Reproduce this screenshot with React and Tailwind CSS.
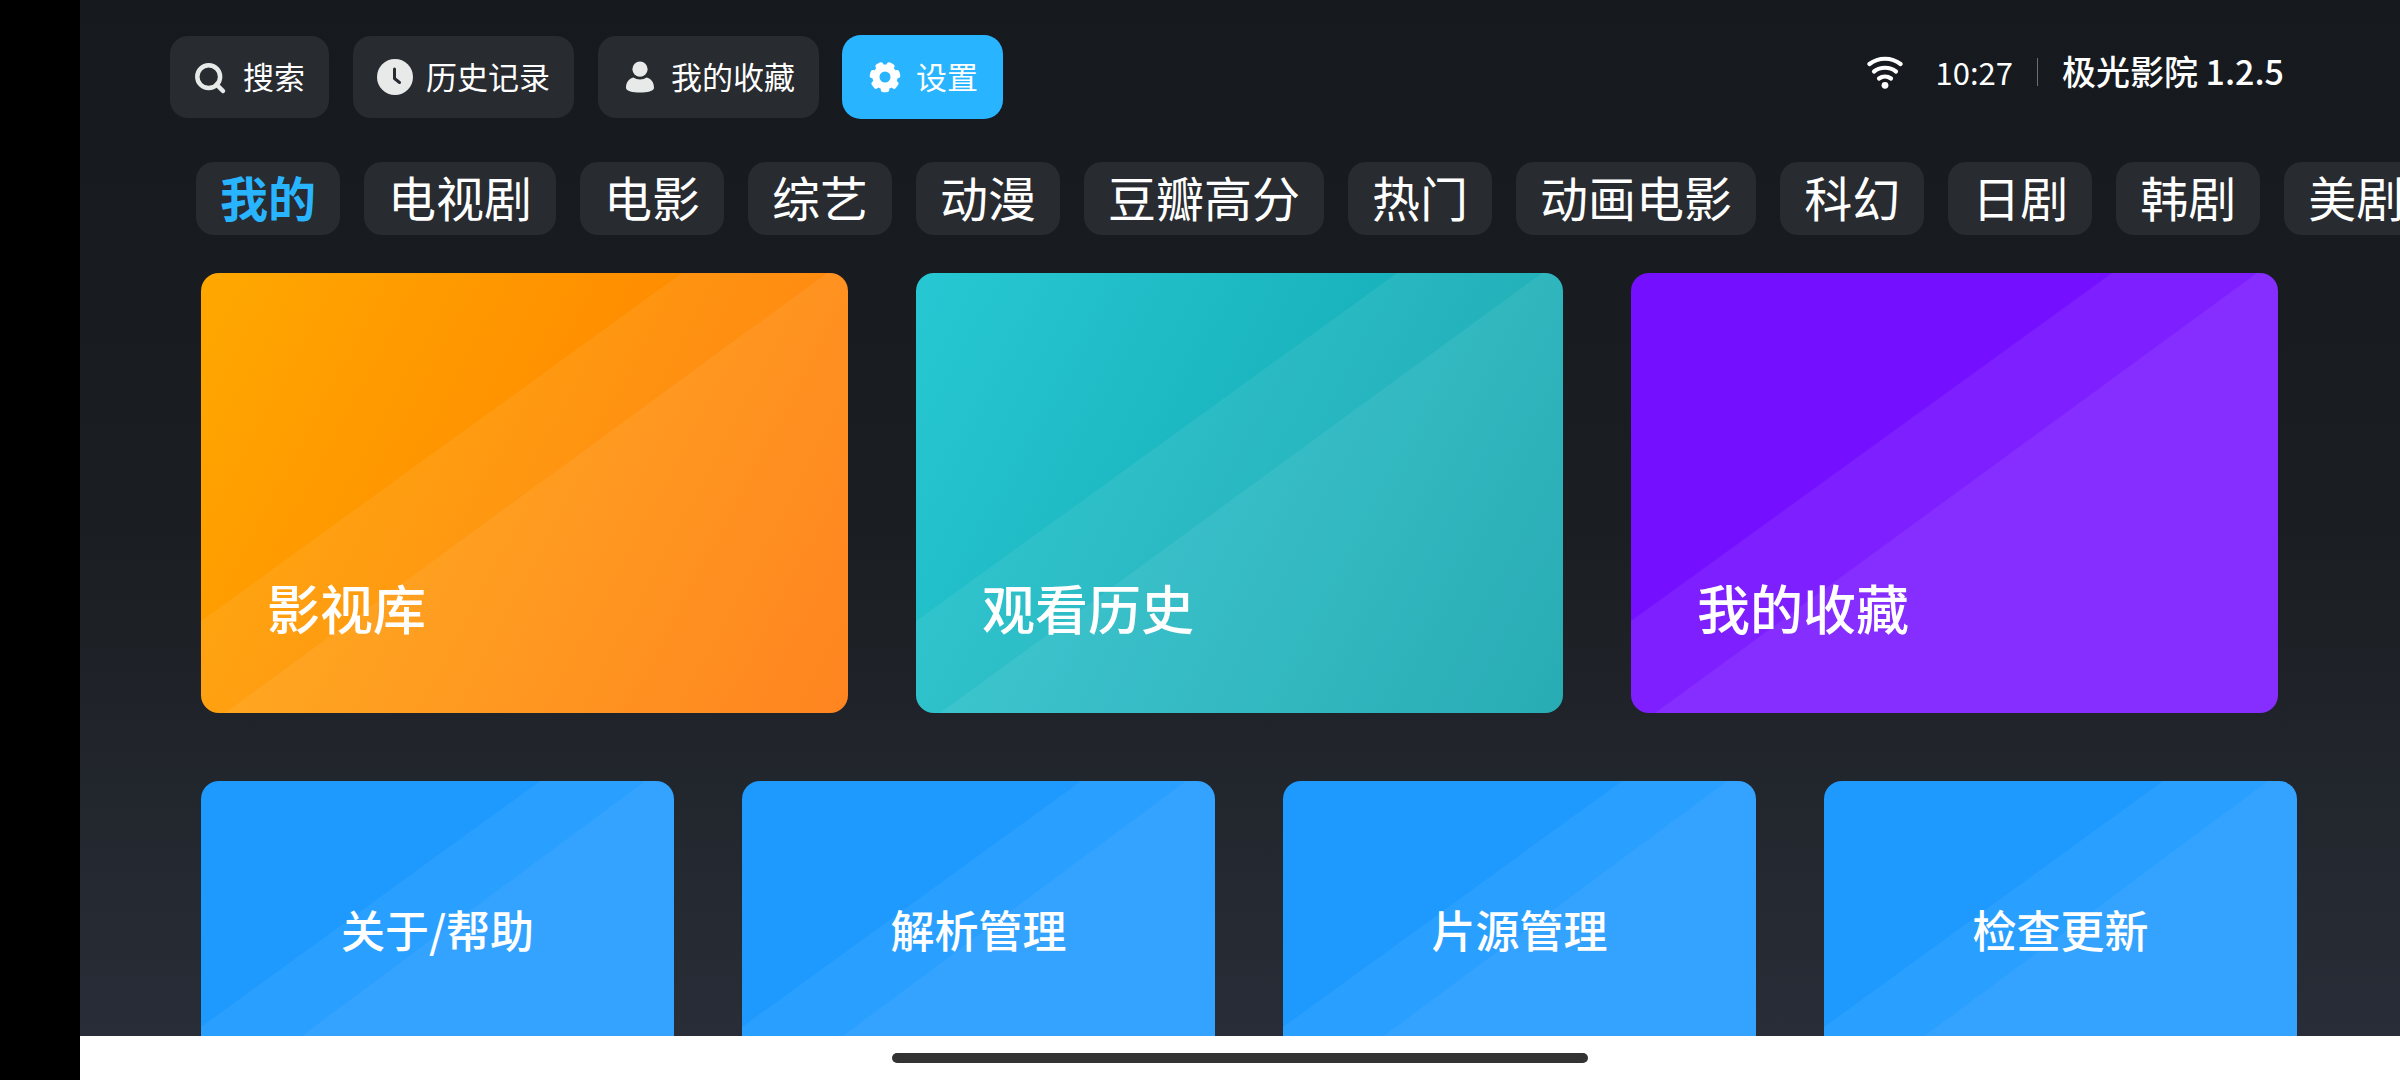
import React, { useState } from 'react'

const menus = [
  { id: 'search', name: '搜索' },
  { id: 'history', name: '历史记录' },
  { id: 'favorite', name: '我的收藏' },
  { id: 'setting', name: '设置' },
];

const tabs = ['我的', '电视剧', '电影', '综艺', '动漫', '豆瓣高分', '热门', '动画电影', '科幻', '日剧', '韩剧', '美剧'];

const bigCards = [
  { name: '影视库', color: 'bg-linear-118 from-[#ffa800] via-[#ff8f00] to-[#ff7300]' },
  { name: '观看历史', color: 'bg-linear-118 from-[#27c8d3] to-[#09a1aa]' },
  { name: '我的收藏', color: 'bg-[#750fff]' },
];

const smallCards = ['关于/帮助', '解析管理', '片源管理', '检查更新'];

const gearTeeth = [0, 1, 2, 3, 4, 5, 6];

const MenuIcon = ({ id }) => (
  <svg viewBox="0 0 36 36" className="size-9 shrink-0" fill="currentColor" aria-hidden="true">
    {id === 'search' && (
      <g fill="none" stroke="currentColor" strokeWidth="4.5">
        <circle cx="14.7" cy="17.7" r="11.4" />
        <path d="M22.500 25.500l6.500 6.500" strokeLinecap="round" />
      </g>
    )}
    {id === 'history' && (
      <>
        <circle cx="18" cy="18" r="18" />
        <path d="M17.5 10v9.500l5 4" fill="none" stroke="#282b30" strokeWidth="3" strokeLinecap="round" strokeLinejoin="round" />
      </>
    )}
    {id === 'favorite' && (
      <>
        <circle cx="18" cy="10.2" r="7.6" />
        <path d="M4 29C4 23 7 19.500 11.500 18.500C15 21 21 21 24.500 18.500C29 19.500 32 23 32 29C32 32 25 33.600 18 33.600C11 33.600 4 32 4 29z" />
      </>
    )}
    {id === 'setting' && (
      <g stroke="currentColor" fill="none">
        <circle cx="18" cy="18" r="9" strokeWidth="7" />
        {gearTeeth.map((i) => (
          <path key={i} d="M16.500 30.500h3" strokeWidth="5.500" strokeLinecap="round" transform={`rotate(${(i * 360) / 7} 18 18)`} />
        ))}
      </g>
    )}
  </svg>
)

const WifiIcon = () => (
  <svg viewBox="0 0 36 34" className="h-[34px] w-9" fill="none" stroke="currentColor" strokeWidth="4.2" strokeLinecap="round" aria-hidden="true">
    <path d="M2.500 9c9-7 22-7 31 0" />
    <path d="M7 16.500c6.500-5 15.500-5 22 0" />
    <path d="M12 23.500c3.500-2.500 8.500-2.500 12 0" />
    <circle cx="18" cy="30.300" r="3.400" fill="currentColor" stroke="none" />
  </svg>
)

// two translucent layers, each one starts on a diagonal
const Shine = ({ small }) => (
  <svg
    viewBox={small ? '0 0 473 300' : '0 0 647 440'}
    preserveAspectRatio="none"
    className="absolute inset-0 size-full"
    fill="#fff"
    fillOpacity={small ? 0.05 : 0.065}
    aria-hidden="true"
  >
    <polygon points={small ? '339,0 473,0 473,300 0,300 0,246' : '481,0 647,0 647,440 0,440 0,348'} />
    <polygon points={small ? '444,0 473,0 473,300 40,300' : '626,0 647,0 647,440 24,440'} />
  </svg>
)

const App = () => {
  const [menu, setMenu] = useState('setting');
  const [tab, setTab] = useState('我的');

  return (
    <div className="flex h-screen bg-black font-['Noto_Sans_CJK_SC',sans-serif] text-white">
      <div className="w-20 shrink-0" />
      <div className="flex min-w-0 flex-1 flex-col">
        <main className="flex min-h-0 flex-1 flex-col overflow-hidden bg-linear-to-b from-[#161a1f] via-[#1a1e22] to-[#292d37]">
          <header className="flex shrink-0 items-start justify-between pt-9 pl-[90px] pr-[116px]">
            <div className="flex gap-6">
              {menus.map((item) => (
                <button
                  key={item.id}
                  onClick={() => setMenu(item.id)}
                  className={`flex h-[82px] items-center gap-[13px] rounded-[18px] px-6 text-[31px] leading-none whitespace-nowrap ${
                    menu === item.id ? 'bg-[#29b4ff] ring-1 ring-[#29b4ff]' : 'bg-[#282b30]'
                  }`}
                >
                  <span className={menu === item.id ? 'text-white' : 'text-[#e8eaea]'}>
                    <MenuIcon id={item.id} />
                  </span>
                  <span className="pb-1">{item.name}</span>
                </button>
              ))}
            </div>
            <div className="flex h-[72px] items-center whitespace-nowrap">
              <WifiIcon />
              <time className="ml-8 pb-0.5 text-[31px] leading-none">10:27</time>
              <div className="mx-6 h-7 w-px bg-[#6b6e72]" />
              <h1 className="pb-0.5 text-[34px] leading-none font-medium">极光影院 1.2.5</h1>
            </div>
          </header>

          <nav className="mt-11 flex shrink-0 gap-6 overflow-hidden pl-[116px]">
            {tabs.map((name) => (
              <button
                key={name}
                onClick={() => setTab(name)}
                className={`h-[73px] shrink-0 rounded-[18px] bg-[#282b30] px-6 pb-1.5 text-5xl leading-none whitespace-nowrap ${
                  tab === name ? 'font-bold text-[#29b4ff]' : ''
                }`}
              >
                {name}
              </button>
            ))}
          </nav>

          <section className="mt-[38px] grid shrink-0 grid-cols-3 gap-[68px] pl-[121px] pr-[122px]">
            {bigCards.map((card) => (
              <button
                key={card.name}
                className={`relative flex h-[440px] items-end overflow-hidden rounded-[18px] px-[66px] pb-[74px] ${card.color}`}
              >
                <Shine />
                <span className="relative text-[53px] leading-[64px] font-medium">{card.name}</span>
              </button>
            ))}
          </section>

          <section className="mt-[68px] grid shrink-0 grid-cols-4 gap-[68px] pl-[121px] pr-[103px]">
            {smallCards.map((name) => (
              <button
                key={name}
                className="relative flex h-[300px] items-center justify-center overflow-hidden rounded-[18px] bg-[#1e9aff] pb-1"
              >
                <Shine small />
                <span className="relative text-[44px] leading-none font-medium">{name}</span>
              </button>
            ))}
          </section>
        </main>
        {/* home indicator */}
        <footer className="flex h-11 shrink-0 items-start justify-center bg-white pt-[17px]">
          <div className="h-2.5 w-[30%] rounded-full bg-[#333]" />
        </footer>
      </div>
    </div>
  )
}

export default App
